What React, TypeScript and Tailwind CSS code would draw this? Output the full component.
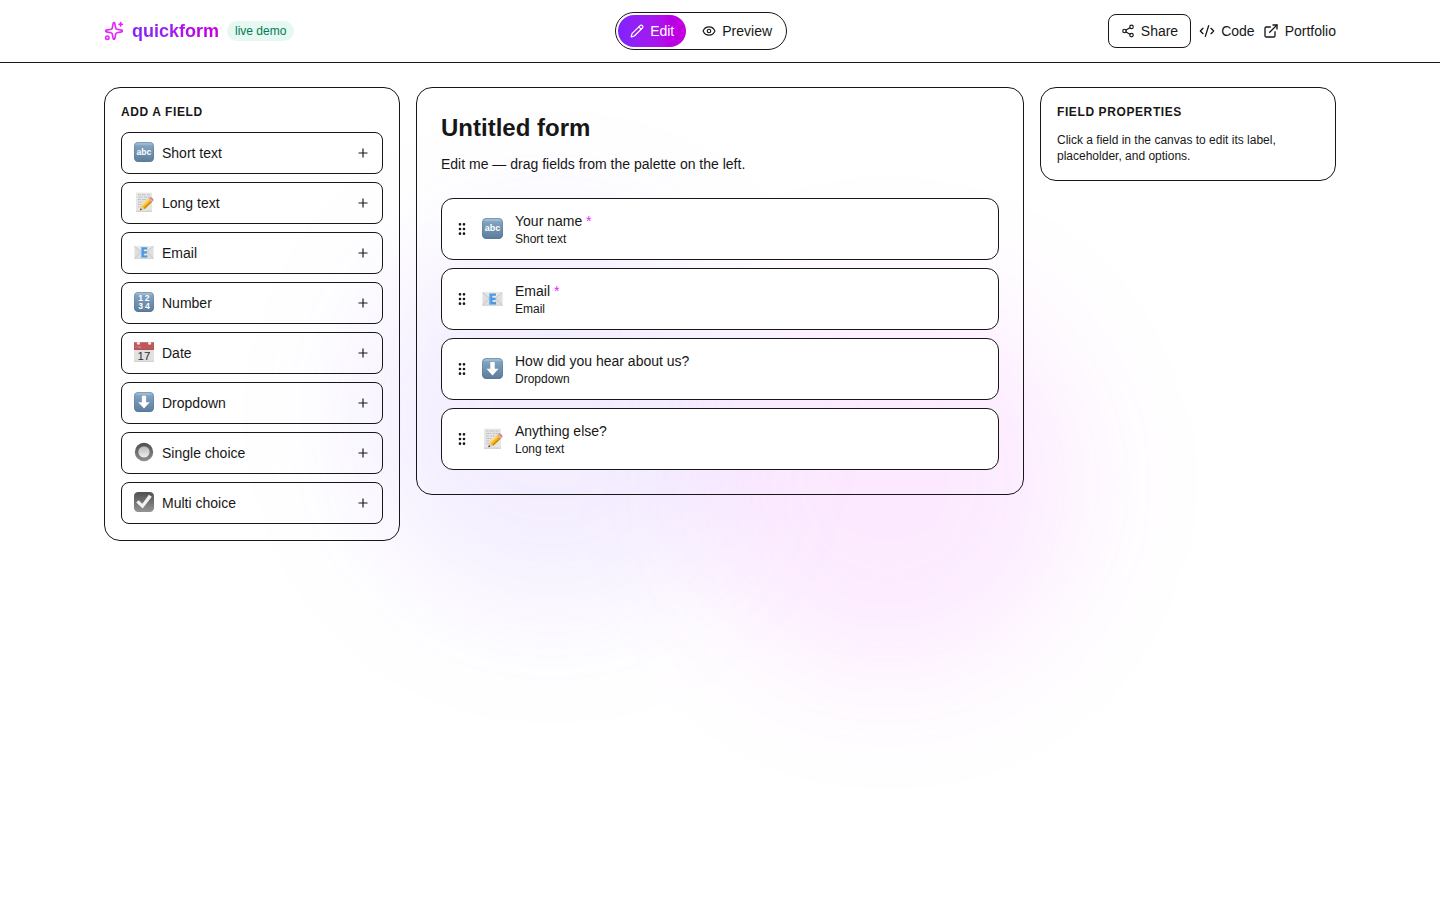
import type { ComponentType } from 'react';
import { CodeXml, Eye, ExternalLink, GripVertical, Pencil, Plus, Share2, Sparkles } from 'lucide-react';

type GlyphProps = { className?: string };

/* Blue keycap tile shared by several field types */
function Tile({ id }: { id: string }) {
  return (
    <>
      <defs>
        <linearGradient id={id} x1="0" y1="0" x2="0" y2="1">
          <stop offset="0" stopColor="#8fb0cb" />
          <stop offset="0.3" stopColor="#7b9dba" />
          <stop offset="1" stopColor="#5b7c9c" />
        </linearGradient>
      </defs>
      <rect width="20" height="20" rx="4.2" fill={`url(#${id})`} />
      <path d="M4 .6h12a3.4 3.4 0 0 1 3 2.2H1A3.4 3.4 0 0 1 4 .6Z" fill="#b4cbdd" opacity=".5" />
      <rect x=".4" y=".4" width="19.2" height="19.2" rx="4" fill="none" stroke="#4f7191" strokeWidth=".6" opacity=".6" />
    </>
  );
}

function ShortTextGlyph({ className }: GlyphProps) {
  return (
    <svg viewBox="0 0 20 20" className={className} aria-hidden="true">
      <Tile id="tile-abc" />
      <text x="10" y="12.6" textAnchor="middle" fontSize="8.6" fontWeight="700" fill="#fff" fontFamily="Liberation Sans, sans-serif">
        abc
      </text>
    </svg>
  );
}

function NumberGlyph({ className }: GlyphProps) {
  return (
    <svg viewBox="0 0 20 20" className={className} aria-hidden="true">
      <Tile id="tile-num" />
      <g fontSize="8.6" fontWeight="700" fill="#fff" textAnchor="middle" fontFamily="Liberation Sans, sans-serif">
        <text x="6.6" y="8.8">1</text>
        <text x="13.2" y="8.8">2</text>
        <text x="6.6" y="16.8">3</text>
        <text x="13.4" y="16.8">4</text>
      </g>
    </svg>
  );
}

function DropdownGlyph({ className }: GlyphProps) {
  return (
    <svg viewBox="0 0 20 20" className={className} aria-hidden="true">
      <Tile id="tile-down" />
      <path d="M7.9 3.8h4.2v6.4h3.6L10 16.6 4.3 10.2h3.6Z" fill="#fff" />
    </svg>
  );
}

function LongTextGlyph({ className }: GlyphProps) {
  return (
    <svg viewBox="0 0 20 20" className={className} aria-hidden="true">
      <rect x="2" y=".6" width="16" height="19.2" fill="#e6e6e6" />
      <rect x="2" y="18.6" width="16" height="1.2" fill="#cfcfcf" />
      <g stroke="#a6a6a6" strokeWidth=".7" fill="none">
        <path d="M4 2.8h3M8 2.8h4M13 2.8h3" strokeDasharray="1.6 .5" />
        <path d="M4 5.2h5M10 5.2h6" strokeDasharray="1.2 .5" />
        <path d="M4 7.6h3M8 7.6h4" strokeDasharray="1.8 .4" />
        <path d="M4 10h5M4 12.4h3M4 14.8h2.5" strokeDasharray="1.3 .5" />
      </g>
      <path d="m6 18.3 1.3-4.7 3.4 3.4Z" fill="#ecc99a" />
      <path d="m6 18.3.6-2 1.4 1.4Z" fill="#333" />
      <path d="m7.3 13.6 7.5-7.2 3.5 3.3-7.6 7.3Z" fill="#f5b81c" />
      <path d="m7.3 13.6 7.5-7.2 1.1 1-7.5 7.2Z" fill="#ffdc60" />
      <path d="m9.7 16 7.6-7.3 1 1-7.6 7.3Z" fill="#cf860f" />
      <path d="m14.3 6.9 1.1-1.1 3.5 3.3-1.1 1.1Z" fill="#b9bcc0" />
      <path d="m15.4 5.8.7-.6c1-.6 4.1 2.1 3.4 3.4l-.6.6Z" fill="#ee7e7d" />
    </svg>
  );
}

function EmailGlyph({ className }: GlyphProps) {
  return (
    <svg viewBox="0 0 20 20" className={className} aria-hidden="true">
      <rect x=".4" y="4" width="19.2" height="12.6" rx=".5" fill="#dfdfdf" />
      <path d="m.5 4 9.5 7.6L19.500 4Z" fill="#e9e9e9" />
      <path d="m.6 16.3 6.6-6.5M19.400 16.300l-6.600-6.500M.6 4.200 10 11.800l9.400-7.600" fill="none" stroke="#b8b8b8" strokeWidth=".6" />
      <path d="M.5 16.5h19" stroke="#bdbdbd" strokeWidth=".5" />
      <path d="M7 5.2h6.300v2.200H9.800v1.900h3.100v2.100H9.800v2h3.600v2.200H7Z" fill="#4a97e3" />
      <path d="M7 5.2h1v10.4H7Z" fill="#7bb9f1" />
    </svg>
  );
}

function DateGlyph({ className }: GlyphProps) {
  return (
    <svg viewBox="0 0 20 20" className={className} aria-hidden="true">
      <rect y=".2" width="20" height="19.6" fill="#e2e1e0" />
      <path d="M0 .2h20v7.5H0Z" fill="#bd595b" />
      <path d="M0 7h20v.8H0Z" fill="#a9494c" />
      <circle cx="4.4" cy="1.2" r="1.5" fill="#f5e8e8" />
      <circle cx="15.6" cy="1.2" r="1.5" fill="#f5e8e8" />
      <path d="M2 4v2M4 4l1 2M6 4v2h1.2" stroke="#dfa5a5" strokeWidth=".6" fill="none" />
      <path d="M0 18.8h20v1H0Z" fill="#cfcecd" />
      <text x="10" y="17.8" textAnchor="middle" fontSize="11.5" fill="#303030" fontFamily="Liberation Sans, sans-serif">
        17
      </text>
    </svg>
  );
}

function SingleChoiceGlyph({ className }: GlyphProps) {
  return (
    <svg viewBox="0 0 20 20" className={className} aria-hidden="true">
      <defs>
        <linearGradient id="radio-ring" x1="0" y1="0" x2="0" y2="1">
          <stop offset="0" stopColor="#4b4b4b" />
          <stop offset="1" stopColor="#929292" />
        </linearGradient>
        <linearGradient id="radio-dot" x1="0" y1="0" x2="0" y2="1">
          <stop offset="0" stopColor="#b8b8b8" />
          <stop offset="1" stopColor="#efefef" />
        </linearGradient>
      </defs>
      <circle cx="10" cy="10" r="9.2" fill="url(#radio-ring)" />
      <circle cx="10" cy="10" r="6.2" fill="#747474" />
      <circle cx="10" cy="10" r="5.6" fill="url(#radio-dot)" />
    </svg>
  );
}

function MultiChoiceGlyph({ className }: GlyphProps) {
  return (
    <svg viewBox="0 0 20 20" className={className} aria-hidden="true">
      <defs>
        <linearGradient id="check-tile" x1="0" y1="0" x2="0" y2="1">
          <stop offset="0" stopColor="#505050" />
          <stop offset="1" stopColor="#949494" />
        </linearGradient>
      </defs>
      <rect width="20" height="20" rx="4.2" fill="url(#check-tile)" />
      <path d="m2.2 10.4 2.4-2.2 3.7 3.5 6.600-8.900 2.900 2L8.700 16.600Z" fill="#f1f1f1" />
    </svg>
  );
}

type FieldType = { label: string; glyph: ComponentType<GlyphProps> };

const fieldTypes: Record<string, FieldType> = {
  short: { label: 'Short text', glyph: ShortTextGlyph },
  long: { label: 'Long text', glyph: LongTextGlyph },
  email: { label: 'Email', glyph: EmailGlyph },
  number: { label: 'Number', glyph: NumberGlyph },
  date: { label: 'Date', glyph: DateGlyph },
  dropdown: { label: 'Dropdown', glyph: DropdownGlyph },
  single: { label: 'Single choice', glyph: SingleChoiceGlyph },
  multi: { label: 'Multi choice', glyph: MultiChoiceGlyph },
};

const fields = [
  { id: 'name', type: 'short', label: 'Your name', required: true },
  { id: 'email', type: 'email', label: 'Email', required: true },
  { id: 'source', type: 'dropdown', label: 'How did you hear about us?', required: false },
  { id: 'notes', type: 'long', label: 'Anything else?', required: false },
];

function Header() {
  return (
    <header className="border-b bg-white/70">
      <div className="mx-auto flex max-w-7xl items-center justify-between px-6 py-3">
        <div className="flex items-center gap-2">
          <Sparkles size={20} className="text-fuchsia-500" />
          <span className="bg-gradient-to-r from-violet-600 to-fuchsia-600 bg-clip-text text-lg font-bold text-transparent">
            quickform
          </span>
          <span className="rounded-full bg-emerald-500/10 px-2 py-0.5 text-xs text-emerald-700">live demo</span>
        </div>

        <div className="flex items-center gap-1 rounded-full border p-0.5 text-sm">
          <button
            type="button"
            className="flex items-center gap-1.5 rounded-full bg-gradient-to-r from-violet-600 to-fuchsia-600 px-3 py-1.5 text-white"
          >
            <Pencil size={14} /> Edit
          </button>
          <button type="button" className="flex items-center gap-1.5 rounded-full px-3 py-1.5">
            <Eye size={14} /> Preview
          </button>
        </div>

        <div className="flex items-center gap-2 text-sm">
          <button type="button" className="flex items-center gap-1.5 rounded-lg border px-3 py-1.5">
            <Share2 size={14} /> Share
          </button>
          <a href="#code" className="flex items-center gap-1.5">
            <CodeXml size={16} /> Code
          </a>
          <a href="#portfolio" className="flex items-center gap-1.5">
            <ExternalLink size={16} /> Portfolio
          </a>
        </div>
      </div>
    </header>
  );
}

function Palette() {
  return (
    <aside className="col-span-3 rounded-2xl border p-4">
      <h2 className="mb-3 text-xs font-bold tracking-wider uppercase">Add a field</h2>
      <div className="flex flex-col gap-2">
        {Object.entries(fieldTypes).map(([key, { label, glyph: Glyph }]) => (
          <button key={key} type="button" className="flex items-center gap-2 rounded-lg border px-3 py-2.5 text-left text-sm">
            <Glyph className="-mt-0.5 size-5" />
            <span className="flex-1">{label}</span>
            <Plus size={14} />
          </button>
        ))}
      </div>
    </aside>
  );
}

function Canvas() {
  return (
    <section className="col-span-6 rounded-2xl border p-6">
      <input
        aria-label="Form title"
        defaultValue="Untitled form"
        className="block h-8 w-full bg-transparent text-2xl font-bold outline-none"
      />
      <input
        aria-label="Form description"
        defaultValue="Edit me — drag fields from the palette on the left."
        className="mt-2.5 mb-6 block h-5 w-full bg-transparent text-sm outline-none"
      />
      <ul className="flex flex-col gap-2">
        {fields.map((field) => {
          const { label, glyph: Glyph } = fieldTypes[field.type];
          return (
            <li key={field.id} className="flex items-center gap-3 rounded-xl border bg-white p-3">
              <GripVertical size={16} />
              <Glyph className="-mt-0.5 size-[21px]" />
              <div className="min-w-0 flex-1">
                <p className="text-sm">
                  {field.label}
                  {field.required && <span className="text-fuchsia-500"> *</span>}
                </p>
                <p className="text-xs">{label}</p>
              </div>
            </li>
          );
        })}
      </ul>
    </section>
  );
}

export default function App() {
  return (
    <div className="relative isolate min-h-screen overflow-hidden bg-white font-['Liberation_Sans',Arial,sans-serif] text-neutral-900">
      {/* Soft colour glow behind the page */}
      <div className="pointer-events-none absolute inset-0 -z-10">
        <div className="absolute top-1/4 left-1/4 size-96 rounded-full bg-violet-500/10 blur-3xl" />
        <div className="absolute right-1/4 bottom-1/4 size-96 rounded-full bg-fuchsia-500/10 blur-3xl" />
      </div>

      <Header />

      <main className="mx-auto grid max-w-7xl grid-cols-12 items-start gap-4 px-6 py-6">
        <Palette />
        <Canvas />
        <aside className="col-span-3 rounded-2xl border p-4">
          <h2 className="mb-3 text-xs font-bold tracking-wider uppercase">Field properties</h2>
          <p className="text-xs">Click a field in the canvas to edit its label, placeholder, and options.</p>
        </aside>
      </main>
    </div>
  );
}
